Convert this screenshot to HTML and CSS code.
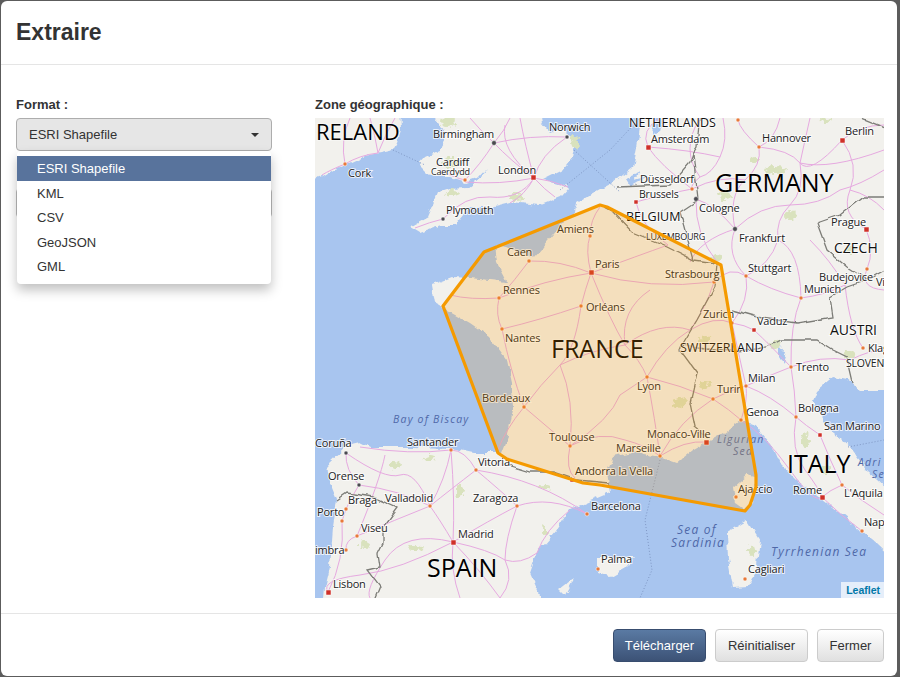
FILE: index.html
```html
<!DOCTYPE html>
<html lang="fr">
<head>
    <meta charset="UTF-8">
    <meta name="viewport" content="width=device-width, initial-scale=1.0">
    <title>Extraire</title>
    <link rel="stylesheet" href="styles.css">
</head>
<body>
    <div class="modal">
        <header class="modal-header">
            <h1>Extraire</h1>
        </header>

        <div class="modal-body">
            <div class="format-col">
                <label class="field-label">Format :</label>
                <div class="dropdown">
                    <button type="button" class="dropdown-toggle">
                        <span>ESRI Shapefile</span>
                        <span class="caret"></span>
                    </button>
                    <ul class="dropdown-menu">
                        <li class="selected">ESRI Shapefile</li>
                        <li>KML</li>
                        <li>CSV</li>
                        <li>GeoJSON</li>
                        <li>GML</li>
                    </ul>
                </div>
                <div class="hidden-field"></div>
            </div>

            <div class="map-col">
                <label class="field-label">Zone géographique :</label>
                <div class="map">
                    <svg class="map-svg" viewBox="315 118 569 480" width="569" height="480">
                        <defs>
                            <filter id="rough" x="-5%" y="-5%" width="110%" height="110%">
                                <feTurbulence type="fractalNoise" baseFrequency="0.09" numOctaves="3" seed="4"/>
                                <feDisplacementMap in="SourceGraphic" scale="7" xChannelSelector="R" yChannelSelector="G"/>
                            </filter>
                            <filter id="wobble" x="-5%" y="-5%" width="110%" height="110%">
                                <feTurbulence type="fractalNoise" baseFrequency="0.07" numOctaves="2" seed="9"/>
                                <feDisplacementMap in="SourceGraphic" scale="5" xChannelSelector="G" yChannelSelector="R"/>
                            </filter>
                            <filter id="blotch" x="-10%" y="-10%" width="120%" height="120%">
                                <feTurbulence type="fractalNoise" baseFrequency="0.2" numOctaves="2" seed="2"/>
                                <feDisplacementMap in="SourceGraphic" scale="9" xChannelSelector="R" yChannelSelector="G"/>
                            </filter>
                        </defs>

                        <rect class="sea" x="315" y="118" width="569" height="480"/>

                        <!-- terre -->
                        <g class="land" filter="url(#rough)">
                            <path d="M300,105 L400,105 L401,130 L397,143 L393,150 L380,153 L365,156 L350,163 L335,168 L322,176 L300,184 Z"/>
                            <path d="M435,105 L435,118 L442,127 L447,137 L438,152 L425,158 L419,165 L427,173 L450,177 L465,182 L477,178 L487,167 L480,178 L467,188 L450,189 L438,193 L428,217 L410,227 L420,233 L442,225 L455,225 L470,207 L490,207 L510,202 L540,205 L560,197 L569,187 L543,180 L563,170 L573,157 L577,140 L563,130 L550,133 L542,123 L540,105 Z"/>
                            <path d="M643,105 L637,147 L633,167 L613,183 L600,190 L577,203 L575,212 L563,223 L543,247 L533,258 L507,247 L495,245 L497,263 L507,282 L470,278 L453,277 L432,285 L435,303 L447,310 L470,323 L490,337 L507,360 L512,383 L513,410 L507,440 L502,453 L473,453 L450,448 L410,447 L370,447 L360,442 L347,445 L328,463 L330,483 L337,500 L333,527 L330,567 L325,587 L323,610 L546,610 L530,573 L537,553 L557,530 L570,510 L610,493 L607,473 L613,457 L633,452 L660,457 L677,463 L693,450 L723,433 L740,420 L757,427 L773,447 L780,463 L800,483 L827,503 L857,527 L877,543 L895,560 L895,105 Z"/>
                            <path d="M733,487 L747,475 L755,477 L753,503 L745,510 L735,503 Z"/>
                            <path d="M727,532 L747,520 L760,540 L757,567 L748,587 L733,588 L728,560 Z"/>
                            <path d="M597,557 L635,557 L627,567 L610,577 L597,573 Z"/>
                            <path d="M560,590 L573,580 L565,595 Z"/>
                        </g>

                        <!-- mers intérieures -->
                        <g class="sea" filter="url(#rough)">
                            <path d="M833,377 L817,390 L813,400 L827,427 L850,447 L867,470 L895,495 L895,390 L860,390 L847,380 Z"/>
                            <path d="M655,105 L662,122 L660,132 L652,136 Z"/>
                            <path d="M625,178 L640,172 L634,180 L648,176 L630,186 Z"/>
                            <path d="M780,345 L786,352 L783,362 L777,352 Z"/>
                        </g>

                        <!-- forêts -->
                        <g class="green" filter="url(#blotch)">
                            <ellipse cx="448" cy="122" rx="8" ry="5"/>
                            <ellipse cx="453" cy="163" rx="10" ry="5"/>
                            <ellipse cx="452" cy="193" rx="8" ry="3"/>
                            <ellipse cx="516" cy="197" rx="8" ry="3"/>
                            <ellipse cx="575" cy="142" rx="4" ry="6"/>
                            <ellipse cx="775" cy="170" rx="11" ry="4"/>
                            <ellipse cx="790" cy="215" rx="6" ry="5"/>
                            <ellipse cx="725" cy="195" rx="6" ry="4"/>
                            <ellipse cx="717" cy="258" rx="5" ry="4"/>
                            <ellipse cx="755" cy="160" rx="5" ry="3"/>
                            <ellipse cx="825" cy="120" rx="5" ry="3"/>
                            <ellipse cx="850" cy="250" rx="5" ry="4"/>
                            <ellipse cx="680" cy="402" rx="7" ry="5"/>
                            <ellipse cx="705" cy="385" rx="6" ry="3"/>
                            <ellipse cx="705" cy="340" rx="6" ry="3"/>
                            <ellipse cx="775" cy="345" rx="6" ry="4"/>
                            <ellipse cx="805" cy="440" rx="4" ry="7"/>
                            <ellipse cx="825" cy="470" rx="5" ry="4"/>
                            <ellipse cx="850" cy="355" rx="6" ry="3"/>
                            <ellipse cx="395" cy="465" rx="7" ry="4"/>
                            <ellipse cx="430" cy="458" rx="6" ry="3"/>
                            <ellipse cx="460" cy="490" rx="4" ry="7"/>
                            <ellipse cx="365" cy="545" rx="5" ry="4"/>
                            <ellipse cx="415" cy="548" rx="8" ry="2"/>
                            <ellipse cx="545" cy="487" rx="6" ry="2"/>
                            <ellipse cx="545" cy="530" rx="2" ry="5"/>
                            <ellipse cx="752" cy="550" rx="3" ry="6"/>
                        </g>

                        <!-- routes -->
                        <g class="roads">
                            <path d="M350,118 Q340,140 345,164 M345,164 Q360,155 378,153 M345,164 Q330,170 322,175 M395,118 Q385,135 378,153 M370,118 Q375,135 378,153"/>
                            <path d="M494,143 Q510,160 534,178 M494,143 Q480,130 470,118 M494,143 Q480,165 465,180 Q455,178 440,170 M494,143 Q505,130 510,118 M534,178 Q540,155 567,137 M534,178 Q525,145 520,118 M534,178 Q550,180 568,187 M534,178 Q545,190 555,197 M534,178 Q520,200 490,197 Q465,195 443,219 M534,178 Q500,185 465,182 M494,143 Q530,135 567,137 M534,178 Q500,150 505,125 M443,219 Q430,222 415,228 M534,178 Q525,195 510,203"/>
                            <path d="M723,118 Q728,140 720,157 T700,177 M759,147 Q762,165 745,180 T735,229 M759,147 Q790,150 800,163 T842,140 M800,163 Q805,190 790,205 T778,240 Q770,265 746,276 M842,140 Q860,165 850,190 T866,229 M735,229 Q760,205 790,205 T840,190 M778,240 Q800,250 801,298 M801,298 Q825,295 845,285 M746,276 Q770,290 801,298 M735,229 Q725,255 746,276 M696,199 Q715,205 735,229 M692,189 Q720,175 745,180 M714,282 Q730,265 746,276 M746,276 Q750,300 732,323 M648,147 Q660,165 692,189 M636,202 Q660,195 692,189 M648,147 Q690,150 720,157 M700,177 Q690,185 692,189 M696,199 Q695,235 717,262 M735,229 Q700,240 690,262 M636,202 Q640,225 668,245 M780,118 Q775,140 759,147 M840,190 Q860,185 884,170 M850,190 Q870,195 884,210 M866,229 Q875,250 867,269 T884,290 M810,240 Q830,260 845,285 M800,163 Q830,170 884,150 M884,125 Q860,125 842,140 M648,147 Q640,130 660,118 M700,177 Q680,150 700,118 M759,147 Q740,130 738,120 M810,118 Q805,140 800,163"/>
                            <path d="M591,273 Q585,250 590,236 Q590,220 600,207 M591,273 Q560,260 529,261 M529,261 Q515,280 499,298 M591,273 Q545,280 499,298 M591,273 Q585,290 581,306 M591,273 Q640,255 668,245 M591,273 Q650,290 714,282 M591,273 Q610,320 625,345 Q640,360 647,377 M581,306 Q540,320 502,329 M499,298 Q495,315 502,329 M499,298 Q470,300 450,295 M581,306 Q575,350 560,365 Q540,385 524,407 M502,329 Q510,370 524,407 M524,407 Q545,425 570,446 M570,446 Q600,430 625,440 Q645,445 660,456 M570,446 Q575,400 560,365 M570,446 Q610,420 620,395 Q635,385 647,377 M647,377 Q655,420 660,456 M660,456 Q685,440 706,442 M647,377 Q680,385 713,399 M647,377 Q665,345 690,330 T732,323 M625,345 Q660,320 690,330 M714,282 Q705,310 690,330 M713,399 Q730,410 741,420 M660,456 Q680,420 713,399 M570,446 Q565,470 575,478 M524,407 Q505,430 498,450 M625,345 Q590,350 560,365 M625,345 Q620,310 650,290"/>
                            <path d="M746,386 Q730,390 713,399 M746,386 Q748,400 741,420 M746,386 Q770,395 796,417 M796,417 Q805,425 820,435 M796,417 Q790,450 805,470 T822,497 M741,420 Q765,435 790,470 T822,497 M822,497 Q840,515 862,531 M822,497 Q830,490 842,485 M820,435 Q830,460 842,485 M842,485 Q860,500 884,515 M791,367 Q770,375 746,386 M791,367 Q795,390 796,417 M791,367 Q820,355 850,360 M746,386 Q740,360 732,323 M754,330 Q770,345 791,367 M732,323 Q745,325 754,330 M801,298 Q790,325 791,367 M850,360 Q870,350 884,350 M863,348 Q850,330 845,285"/>
                            <path d="M360,447 Q410,455 451,450 Q465,450 476,470 M346,453 Q345,470 359,485 M359,485 Q400,490 430,506 M346,453 Q385,480 400,475 T430,506 M451,450 Q445,480 430,506 M451,450 Q455,500 453,542 M453,542 Q440,520 430,506 M453,542 Q490,520 517,506 M517,506 Q550,495 587,514 M476,470 Q500,490 517,506 M476,470 Q540,480 587,514 M476,470 Q450,490 430,506 M346,509 Q344,515 342,521 M342,521 Q345,560 328,592 M453,542 Q400,570 360,575 T328,592 M453,542 Q480,570 500,598 M453,542 Q450,570 460,598 M430,506 Q395,520 357,536 M453,542 Q405,530 385,560 T370,598 M517,506 Q505,540 505,560 Q520,565 537,553 Q545,530 570,510 M453,542 Q490,550 505,560 M505,560 Q515,580 500,598 M357,536 Q345,540 346,550 M359,485 Q350,500 346,509 M385,455 Q380,480 357,536"/>
                        </g>

                        <!-- frontières -->
                        <g class="borders" filter="url(#wobble)">
                            <path d="M600,205 L613,212 L633,233 L667,247 L693,260 L717,263 L715,287 L697,320 L682,345 L680,350 L697,373 L690,403 L695,427 L707,437"/>
                            <path d="M732,310 L757,317 L797,323 L833,317 L830,297 L847,287 L867,280 L890,267"/>
                            <path d="M817,223 L827,250 L847,267 L867,280 M817,223 L840,215 L863,197 L890,197"/>
                            <path d="M738,352 L767,347 L780,340 L817,340 L833,350 L847,357 L853,383"/>
                            <path d="M693,153 L690,162 L670,185 L617,187 M700,112 L697,147 L693,153 M693,153 L698,200 L680,212 L693,260"/>
                            <path d="M507,465 L530,472 L553,472 L577,480 L610,483"/>
                            <path d="M337,500 L347,493 L373,497 L397,508 L383,527 L383,543 L378,553 L380,567 L367,570 L380,587 L373,604"/>
                            <path d="M682,345 L738,352 M846,112 L890,130"/>
                        </g>

                        <g class="sea-bounds">
                            <path d="M393,150 L425,165 M574,150 L620,192 M660,460 L645,520 L652,570 L640,598 M560,190 L610,150 L640,118 M848,447 L884,440"/>
                        </g>

                        <!-- villes -->
                        <g class="dot-orange">
                            <circle cx="345" cy="164" r="2"/><circle cx="465" cy="180" r="2"/><circle cx="590" cy="236" r="2"/>
                            <circle cx="529" cy="261" r="2"/><circle cx="499" cy="298" r="2"/><circle cx="581" cy="306" r="2"/>
                            <circle cx="502" cy="329" r="2"/><circle cx="759" cy="147" r="2"/><circle cx="738" cy="120" r="2"/>
                            <circle cx="692" cy="189" r="2"/><circle cx="746" cy="276" r="2"/><circle cx="714" cy="282" r="2"/>
                            <circle cx="867" cy="269" r="2"/><circle cx="801" cy="298" r="2"/><circle cx="732" cy="323" r="2"/>
                            <circle cx="863" cy="348" r="2"/><circle cx="791" cy="367" r="2"/><circle cx="746" cy="386" r="2"/>
                            <circle cx="647" cy="377" r="2"/><circle cx="713" cy="399" r="2"/><circle cx="741" cy="420" r="2"/>
                            <circle cx="796" cy="417" r="2"/><circle cx="660" cy="456" r="2"/><circle cx="736" cy="497" r="2"/>
                            <circle cx="842" cy="485" r="2"/><circle cx="862" cy="531" r="2"/><circle cx="745" cy="579" r="2"/>
                            <circle cx="598" cy="569" r="2"/><circle cx="587" cy="514" r="2"/><circle cx="524" cy="407" r="2"/>
                            <circle cx="570" cy="446" r="2"/><circle cx="451" cy="450" r="2"/><circle cx="476" cy="470" r="2"/>
                            <circle cx="517" cy="506" r="2"/><circle cx="430" cy="506" r="2"/><circle cx="346" cy="509" r="2"/>
                            <circle cx="342" cy="521" r="2"/><circle cx="357" cy="536" r="2"/><circle cx="346" cy="550" r="2"/>
                        </g>
                        <g class="dot-dark">
                            <circle cx="494" cy="143" r="2.4"/><circle cx="567" cy="137" r="2"/><circle cx="443" cy="219" r="2"/>
                            <circle cx="696" cy="199" r="2.4"/><circle cx="735" cy="229" r="2.4"/><circle cx="346" cy="453" r="2"/>
                            <circle cx="359" cy="485" r="2"/>
                        </g>
                        <g class="dot-red">
                            <rect x="531" y="175" width="5" height="5"/><rect x="589" y="270" width="5" height="5"/><rect x="646" y="145" width="5" height="5"/>
                            <rect x="840" y="138" width="5" height="5"/><rect x="634" y="200" width="4" height="4"/><rect x="864" y="227" width="5" height="5"/>
                            <rect x="752" y="328" width="4" height="4"/><rect x="818" y="433" width="4" height="4"/><rect x="704" y="440" width="5" height="5"/>
                            <rect x="820" y="495" width="5" height="5"/><rect x="451" y="540" width="5" height="5"/><rect x="326" y="590" width="5" height="5"/>
                            <rect x="570" y="478" width="4" height="4"/>
                        </g>

                        <g class="labels">
                            <text class="xl ireland" x="316" y="140">RELAND</text>
                            <text class="xl" x="715" y="192">GERMANY</text>
                            <text class="xl" x="551" y="358">FRANCE</text>
                            <text class="xl" x="787" y="473">ITALY</text>
                            <text class="xl" x="427" y="577">SPAIN</text>

                            <text class="md" x="629" y="127">NETHERLANDS</text>
                            <text class="md" x="626" y="221">BELGIUM</text>
                            <text class="md" x="680" y="352">SWITZERLAND</text>
                            <text class="lg" x="834" y="253">CZECH</text>
                            <text class="lg" x="830" y="335">AUSTRI</text>
                            <text class="xs" x="646" y="240">LUXEMBOURG</text>
                            <text class="sm" x="846" y="367">SLOVEN</text>

                            <text x="433" y="138">Birmingham</text>
                            <text x="549" y="131">Norwich</text>
                            <text x="348" y="177">Cork</text>
                            <text x="436" y="166">Cardiff</text>
                            <text class="xs" x="431" y="175">Caerdydd</text>
                            <text x="498" y="174">London</text>
                            <text x="446" y="214">Plymouth</text>
                            <text x="557" y="233">Amiens</text>
                            <text x="507" y="256">Caen</text>
                            <text x="595" y="268">Paris</text>
                            <text x="503" y="294">Rennes</text>
                            <text x="586" y="311">Orléans</text>
                            <text x="505" y="342">Nantes</text>
                            <text x="651" y="143">Amsterdam</text>
                            <text x="762" y="142">Hannover</text>
                            <text x="845" y="135">Berlin</text>
                            <text x="640" y="183">Düsseldorf</text>
                            <text class="sm" x="639" y="198">Brussels</text>
                            <text x="699" y="212">Cologne</text>
                            <text x="739" y="242">Frankfurt</text>
                            <text x="831" y="226">Prague</text>
                            <text x="748" y="272">Stuttgart</text>
                            <text x="665" y="278">Strasbourg</text>
                            <text x="819" y="281">Budejovice</text>
                            <text x="876" y="286">Vi</text>
                            <text x="804" y="293">Munich</text>
                            <text x="703" y="318">Zurich</text>
                            <text x="757" y="325">Vaduz</text>
                            <text x="868" y="352">Klag</text>
                            <text x="796" y="371">Trento</text>
                            <text x="748" y="382">Milan</text>
                            <text x="637" y="390">Lyon</text>
                            <text x="717" y="393">Turin</text>
                            <text x="746" y="416">Genoa</text>
                            <text x="798" y="412">Bologna</text>
                            <text x="824" y="430">San Marino</text>
                            <text x="647" y="438">Monaco-Ville</text>
                            <text x="616" y="452">Marseille</text>
                            <text x="575" y="475">Andorra la Vella</text>
                            <text x="738" y="493">Ajaccio</text>
                            <text x="591" y="510">Barcelona</text>
                            <text x="793" y="494">Rome</text>
                            <text x="844" y="497">L'Aquila</text>
                            <text x="864" y="526">Nap</text>
                            <text x="601" y="563">Palma</text>
                            <text x="748" y="573">Cagliari</text>
                            <text x="482" y="402">Bordeaux</text>
                            <text x="549" y="441">Toulouse</text>
                            <text x="315" y="447">Coruña</text>
                            <text x="407" y="446">Santander</text>
                            <text x="478" y="466">Vitoria</text>
                            <text x="328" y="480">Orense</text>
                            <text x="348" y="504">Braga</text>
                            <text x="385" y="502">Valladolid</text>
                            <text x="473" y="502">Zaragoza</text>
                            <text x="317" y="516">Porto</text>
                            <text x="361" y="532">Viseu</text>
                            <text x="458" y="538">Madrid</text>
                            <text x="315" y="554">imbra</text>
                            <text x="333" y="588">Lisbon</text>
                        </g>

                        <g class="water-labels">
                            <text x="393" y="423">Bay of Biscay</text>
                            <text x="717" y="443">Ligurian</text>
                            <text x="733" y="455">Sea</text>
                            <text x="858" y="466">Adri</text>
                            <text x="872" y="478">Se</text>
                            <text class="wide" x="677" y="534">Sea of</text>
                            <text class="wide" x="671" y="547">Sardinia</text>
                            <text class="wide" x="771" y="556">Tyrrhenian Sea</text>
                        </g>

                        <!-- zone sélectionnée -->
                        <polygon class="zone" points="443,306 484,252 600,205 607,207 721,265 756,475 756,487 750,505 745,511 600,485 583,483 507,459 498,453"/>
                    </svg>
                    <a class="attribution">Leaflet</a>
                </div>
            </div>
        </div>

        <footer class="modal-footer">
            <button type="button" class="btn btn-primary">Télécharger</button>
            <button type="button" class="btn btn-reset">Réinitialiser</button>
            <button type="button" class="btn btn-close">Fermer</button>
        </footer>
    </div>
</body>
</html>
```

FILE: styles.css
```css
html, body {
    margin: 0;
    padding: 0;
    height: 100%;
}
body {
    font-family: "Liberation Sans", Arial, sans-serif;
    font-size: 13px;
    color: #333;
    background-color: #5c5c5c;
    overflow: hidden;
}
.modal {
    display: flex;
    flex-direction: column;
    width: 896px;
    height: 675px;
    margin: 1px 0 0 1px;
    background-color: #fff;
    border-radius: 6px;
}
.modal-header {
    height: 63px;
    border-bottom: 1px solid #e5e5e5;
    padding: 0 15px;
    display: flex;
    align-items: center;
}
.modal-header h1 {
    margin: 0;
    font-size: 23px;
    font-weight: bold;
    color: #333;
}
.modal-body {
    flex: 1;
    display: flex;
    gap: 43px;
    padding: 32px 13px 0 15px;
}
.format-col {
    width: 256px;
}
.map-col {
    width: 569px;
}
.field-label {
    display: block;
    height: 21px;
    line-height: 15px;
    font-weight: bold;
    font-size: 13px;
    color: #333;
}
.dropdown {
    position: relative;
}
.dropdown-toggle {
    display: flex;
    align-items: center;
    justify-content: space-between;
    width: 256px;
    height: 33px;
    padding: 0 12px;
    background-color: #e6e6e6;
    border: 1px solid #adadad;
    border-radius: 4px;
    font-family: inherit;
    font-size: 13px;
    color: #333;
}
.caret {
    width: 0;
    height: 0;
    border-top: 4px solid #333;
    border-left: 4px solid transparent;
    border-right: 4px solid transparent;
}
.dropdown-menu {
    position: absolute;
    top: 33px;
    left: 1px;
    width: 254px;
    margin: 0;
    padding: 5px 0;
    list-style: none;
    background-color: #fff;
    border-radius: 4px;
    box-shadow: 0 6px 12px rgba(0, 0, 0, 0.25);
    z-index: 10;
}
.dropdown-menu li {
    height: 24.5px;
    line-height: 26px;
    padding-left: 20px;
    font-size: 13px;
    color: #333;
}
.dropdown-menu li.selected {
    background-color: #58739c;
    color: #fff;
}
.hidden-field {
    box-sizing: border-box;
    height: 30px;
    margin-top: 37px;
    border: 1px solid #bbb;
    border-radius: 4px;
}
.map {
    position: relative;
    width: 569px;
    height: 480px;
    overflow: hidden;
}
.map-svg {
    display: block;
}
.sea {
    fill: #a8c5ef;
}
.land {
    fill: #f2f1ed;
}
.green {
    fill: #d9e2bd;
}
.roads {
    fill: none;
    stroke: #e6a9e0;
    stroke-width: 1;
}
.borders {
    fill: none;
    stroke: #7d7d78;
    stroke-width: 1.3;
}
.sea-bounds {
    fill: none;
    stroke: #7f97c4;
    stroke-width: 1;
    stroke-dasharray: 1 2;
}
.dot-orange {
    fill: #e8793a;
    stroke: #fff;
    stroke-width: 0.5;
}
.dot-dark {
    fill: #4a4a4f;
    stroke: #fff;
    stroke-width: 0.5;
}
.dot-red {
    fill: #cf3029;
    stroke: #fff;
    stroke-width: 0.5;
}
.labels text {
    font-family: "Open Sans", "Liberation Sans", sans-serif;
    font-size: 11px;
    letter-spacing: -0.2px;
    fill: #222;
    stroke: #fff;
    stroke-opacity: 0.75;
    stroke-width: 2px;
    paint-order: stroke;
}
.labels .xl {
    font-size: 25px;
    letter-spacing: 0;
    fill: #000;
    stroke-opacity: 0.4;
}
.labels .ireland {
    font-size: 22px;
}
.labels .lg {
    font-size: 14px;
    letter-spacing: 0;
    fill: #111;
}
.labels .md {
    font-size: 12.5px;
    letter-spacing: 0;
    fill: #111;
}
.labels .sm {
    font-size: 10.5px;
}
.labels .xs {
    font-size: 9px;
}
.water-labels text {
    font-family: "Open Sans", "Liberation Sans", sans-serif;
    font-size: 10.5px;
    font-style: italic;
    letter-spacing: 1.2px;
    fill: #4f68a8;
}
.water-labels .wide {
    font-size: 12px;
}
.zone {
    fill: #ff9900;
    fill-opacity: 0.2;
    stroke: #f59a00;
    stroke-width: 3.2;
    stroke-linejoin: round;
}
.attribution {
    position: absolute;
    right: 0;
    bottom: 0;
    padding: 0 4px 0 5px;
    height: 16px;
    line-height: 17px;
    background-color: rgba(255, 255, 255, 0.7);
    font-size: 10.5px;
    font-weight: bold;
    color: #0078a8;
}
.modal-footer {
    display: flex;
    justify-content: flex-end;
    gap: 9px;
    height: 47px;
    padding: 15px 13px 0 0;
    border-top: 1px solid #e5e5e5;
}
.btn {
    height: 33px;
    padding: 0;
    background: linear-gradient(to bottom, #fff, #e0e0e0);
    border: 1px solid #ccc;
    border-radius: 4px;
    font-family: inherit;
    font-size: 13px;
    color: #333;
}
.btn-primary {
    width: 93px;
    background: linear-gradient(to bottom, #5a7aa3, #3c5276);
    border-color: #384d6f;
    color: #fff;
}
.btn-reset {
    width: 93px;
}
.btn-close {
    width: 67px;
}
```
